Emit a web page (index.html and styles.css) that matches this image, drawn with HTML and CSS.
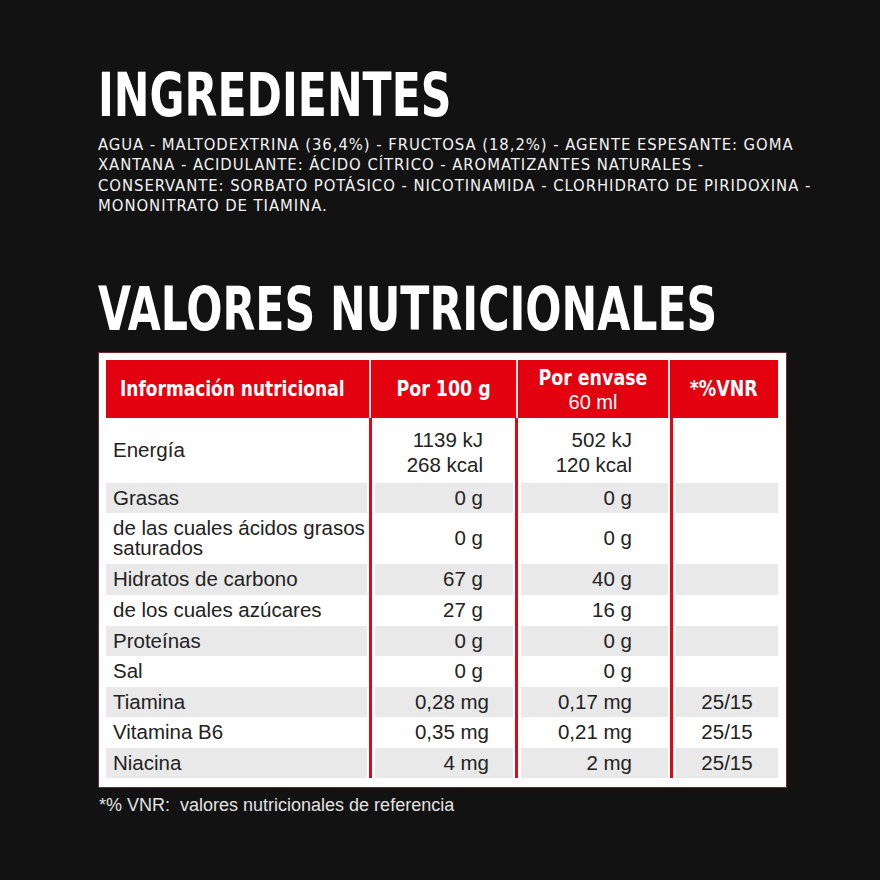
FILE: index.html
```html
<!DOCTYPE html>
<html lang="es">
<head>
<meta charset="utf-8">
<title>Ingredientes y valores nutricionales</title>
<link rel="stylesheet" href="styles.css">
</head>
<body>
<main class="page">
  <h1 class="title"><span class="squeeze">INGREDIENTES</span></h1>
  <p class="ingr">AGUA - MALTODEXTRINA (36,4%) - FRUCTOSA (18,2%) - AGENTE ESPESANTE: GOMA<br>XANTANA - ACIDULANTE: ÁCIDO CÍTRICO - AROMATIZANTES NATURALES -<br>CONSERVANTE: SORBATO POTÁSICO - NICOTINAMIDA - CLORHIDRATO DE PIRIDOXINA -<br>MONONITRATO DE TIAMINA.</p>

  <h2 class="title title-2"><span class="squeeze">VALORES NUTRICIONALES</span></h2>

  <div class="panel">
    <div class="thead">
      <div class="th th-left"><span class="hb">Información nutricional</span></div>
      <div class="th"><span class="hb">Por 100 g</span></div>
      <div class="th th-stack"><span class="hb">Por envase</span><span class="hs">60 ml</span></div>
      <div class="th"><span class="hb">*%VNR</span></div>
    </div>

    <div class="tbody">
      <div class="sep s1"><i></i></div>
      <div class="sep s2"><i></i></div>
      <div class="sep s3"><i></i></div>

      <div class="td c1">Energía</div>
      <div class="td c2 two">1139 kJ<br>268 kcal</div>
      <div class="td c3 two">502 kJ<br>120 kcal</div>
      <div class="td c4"></div>

      <div class="td c1 g">Grasas</div>
      <div class="td c2 g">0 g</div>
      <div class="td c3 g">0 g</div>
      <div class="td c4 g"></div>

      <div class="td c1 tight">de las cuales ácidos grasos<br>saturados</div>
      <div class="td c2">0 g</div>
      <div class="td c3">0 g</div>
      <div class="td c4"></div>

      <div class="td c1 g">Hidratos de carbono</div>
      <div class="td c2 g">67 g</div>
      <div class="td c3 g">40 g</div>
      <div class="td c4 g"></div>

      <div class="td c1">de los cuales azúcares</div>
      <div class="td c2">27 g</div>
      <div class="td c3">16 g</div>
      <div class="td c4"></div>

      <div class="td c1 g">Proteínas</div>
      <div class="td c2 g">0 g</div>
      <div class="td c3 g">0 g</div>
      <div class="td c4 g"></div>

      <div class="td c1">Sal</div>
      <div class="td c2">0 g</div>
      <div class="td c3">0 g</div>
      <div class="td c4"></div>

      <div class="td c1 g">Tiamina</div>
      <div class="td c2 g mg">0,28 mg</div>
      <div class="td c3 g">0,17 mg</div>
      <div class="td c4 g">25/15</div>

      <div class="td c1">Vitamina B6</div>
      <div class="td c2 mg">0,35 mg</div>
      <div class="td c3">0,21 mg</div>
      <div class="td c4">25/15</div>

      <div class="td c1 g">Niacina</div>
      <div class="td c2 g mg">4 mg</div>
      <div class="td c3 g">2 mg</div>
      <div class="td c4 g">25/15</div>
    </div>
  </div>

  <p class="note">*% VNR:&nbsp; valores nutricionales de referencia</p>
</main>
</body>
</html>
```

FILE: styles.css
```css
html, body {
  margin: 0;
  padding: 0;
  background: #121212;
}

.page {
  width: 880px;
  height: 880px;
  box-sizing: border-box;
  padding: 65px 0 0 98px;
  background: #121212;
  color: #fff;
  font-family: "Liberation Sans", Arial, sans-serif;
}

.title {
  margin: 0;
  font-family: "DejaVu Sans Condensed", "DejaVu Sans", sans-serif;
  font-weight: 700;
  font-size: 60px;
  line-height: 60px;
  color: #fff;
  white-space: nowrap;
}

.squeeze {
  display: inline-block;
  transform: scaleX(0.79);
  transform-origin: left center;
}

.ingr {
  margin: 10px 0 0 0;
  font-family: "DejaVu Sans Condensed", "DejaVu Sans", sans-serif;
  font-size: 16.5px;
  line-height: 20.4px;
  letter-spacing: 0.95px;
  color: #f2f2f2;
  white-space: nowrap;
}

.title-2 {
  margin-top: 62px;
}

.panel {
  margin: 14px 0 0 1px;
  width: 687px;
  box-sizing: border-box;
  padding: 7px 8px 9px 7px;
  background: #fff;
  box-shadow: 0 0 0 1px #6e2a2e;
}

.thead {
  display: grid;
  grid-template-columns: 263px 145px 150px 108px;
  column-gap: 2px;
  height: 58px;
  background: #f8e6e6;
}

.th {
  background: #e3000f;
  color: #fff;
  display: flex;
  flex-direction: column;
  align-items: center;
  justify-content: center;
  white-space: nowrap;
  overflow: visible;
}

.th-left {
  align-items: flex-start;
  padding-left: 14px;
}

.hb {
  display: inline-block;
  font-family: "DejaVu Sans Condensed", "DejaVu Sans", sans-serif;
  font-weight: 700;
  font-size: 22px;
  line-height: 26px;
  white-space: nowrap;
  transform: scaleX(0.88);
}

.th-left .hb {
  transform-origin: left center;
  transform: scaleX(0.86);
}

.th-stack .hb {
  line-height: 24px;
  margin-top: 3px;
}

.hs {
  font-family: "Liberation Sans", Arial, sans-serif;
  font-size: 20px;
  line-height: 24px;
}

.tbody {
  display: grid;
  grid-template-columns: 261px 8px 138px 8px 147px 8px 102px;
  grid-template-rows: 65px 30px 51px 31px 31px 30px 31px 30px 31px 30px;
  color: #222;
  font-size: 20.5px;
}

.sep {
  grid-row: 1 / -1;
  display: flex;
}

.sep i {
  display: block;
  width: 3px;
  margin-left: 2px;
  background: #dc0a18;
}

.s1 { grid-column: 2; }
.s2 { grid-column: 4; }
.s3 { grid-column: 6; }

.td {
  display: flex;
  align-items: center;
  line-height: 24px;
  white-space: nowrap;
}

.g {
  background: #e9e9e9;
}

.c1 {
  grid-column: 1;
  padding-left: 7px;
}

.c2 {
  grid-column: 3;
  justify-content: flex-end;
  text-align: right;
  padding-right: 30px;
}

.c2.mg {
  padding-right: 24px;
}

.c3 {
  grid-column: 5;
  justify-content: flex-end;
  text-align: right;
  padding-right: 36px;
}

.c4 {
  grid-column: 7;
  justify-content: center;
}

.two {
  line-height: 25px;
  padding-top: 4px;
}

.tight {
  line-height: 20.5px;
}

.note {
  margin: 8px 0 0 1px;
  font-size: 18px;
  line-height: 20px;
  color: #e2e2e2;
}
```
